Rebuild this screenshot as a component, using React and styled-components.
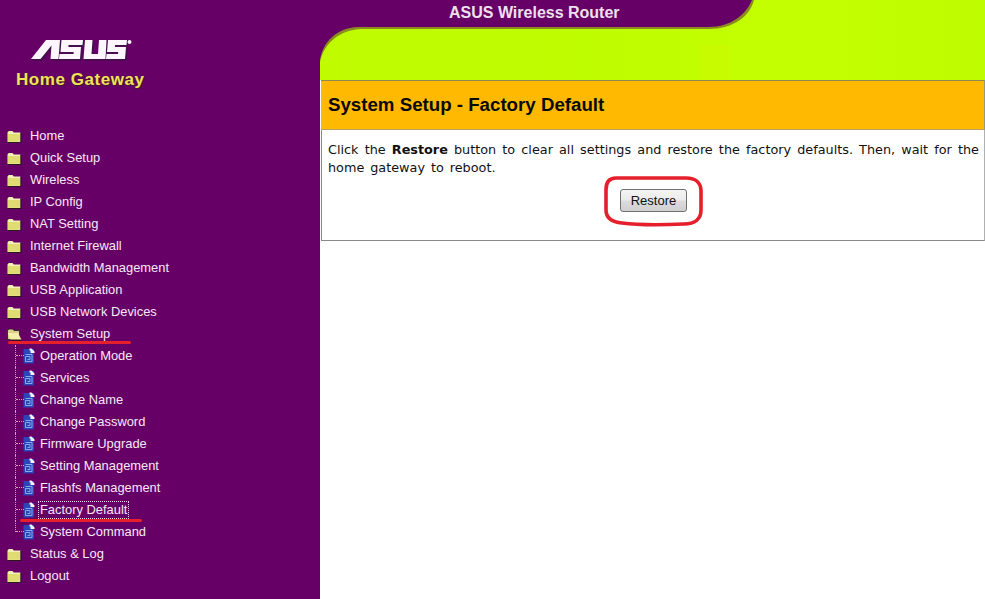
import React from "react";
import styled, { createGlobalStyle } from "styled-components";

const GlobalStyle = createGlobalStyle`
  html, body {
    margin: 0;
    padding: 0;
    background: #fff;
    overflow: hidden;
  }
`;

const Page = styled.div`
  display: flex;
  width: 985px;
  height: 599px;
  overflow: hidden;
`;

const Sidebar = styled.aside`
  width: 320px;
  flex: none;
  background: #660066;
  padding-top: 39px;
  box-sizing: border-box;
`;

const Brand = styled.div`
  height: 86px;
  padding-left: 16px;
`;

const LogoMark = styled.svg`
  display: block;
  width: 102px;
  height: 24px;
  margin-left: 14px;
  filter: blur(0.35px);
`;

const GatewayTitle = styled.div`
  margin-top: 7px;
  font: bold 17px "Liberation Sans", Arial, sans-serif;
  letter-spacing: 0.55px;
  color: #efe25c;
  text-shadow: 1px 1px 1px #3c1c20;
`;

const Tree = styled.ul`
  list-style: none;
  margin: 0;
  padding: 0;
`;

const Row = styled.li`
  display: flex;
  align-items: center;
  height: 22px;
  padding-left: ${(p) => (p.$child ? "23px" : "7px")};
  position: relative;
  font: 12.9px "Liberation Sans", Arial, sans-serif;
  color: #f6e8f6;
`;

const Label = styled.span`
  margin-left: ${(p) => (p.$child ? "4px" : "7px")};
  padding: 0 1px;
  outline: ${(p) => (p.$focused ? "1px dotted #e8d8e8" : "none")};
  line-height: 16px;
`;

const Connector = styled.i`
  position: absolute;
  left: 15px;
  top: 0;
  height: ${(p) => (p.$last ? "11px" : "22px")};
  width: 8px;
  border-left: 1px dotted #c8a4c8;
  &::after {
    content: "";
    position: absolute;
    left: 0;
    top: 10px;
    width: 8px;
    border-top: 1px dotted #c8a4c8;
  }
`;

const RedMark = styled.span`
  position: absolute;
  left: ${(p) => p.$left}px;
  width: ${(p) => p.$width}px;
  bottom: ${(p) => p.$bottom}px;
  height: 3px;
  border-radius: 2px;
  background: #e5202c;
`;

const Main = styled.main`
  flex: 1;
  display: flex;
  flex-direction: column;
  background: #fff;
  min-width: 0;
`;

const Banner = styled.div`
  position: relative;
  height: 80px;
  flex: none;
`;

const BannerArt = styled.svg`
  display: block;
  width: 665px;
  height: 80px;
`;

const BannerTitle = styled.div`
  position: absolute;
  left: 129px;
  top: 4px;
  font: bold 16px "Liberation Sans", Arial, sans-serif;
  color: #eee0ee;
`;

const TitleBar = styled.h1`
  margin: 0 0 0 1px;
  height: 50px;
  box-sizing: border-box;
  border-top: 1px solid #8f8a50;
  border-bottom: 1px solid #b9a060;
  border-right: 1px solid #9a9a70;
  background: #ffb900;
  padding-left: 7px;
  display: flex;
  align-items: center;
  font: bold 18.7px "Liberation Sans", Arial, sans-serif;
  color: #0a0a0a;
`;

const Panel = styled.section`
  margin-left: 1px;
  height: 111px;
  box-sizing: border-box;
  border-left: 1px solid #8a8a8a;
  border-right: 1px solid #b0b0b0;
  border-bottom: 1px solid #8a8a8a;
  padding: 11px 5px 0 6px;
  background: #fff;
`;

const Message = styled.p`
  margin: 0;
  font: 12.8px/18px "DejaVu Sans", Verdana, sans-serif;
  word-spacing: 1.9px;
  color: #111;
  text-align: justify;
`;

const ButtonRow = styled.div`
  display: flex;
  justify-content: center;
  margin-top: 12px;
`;

const Circled = styled.div`
  position: relative;
`;

const RestoreButton = styled.button`
  width: 67px;
  height: 23px;
  padding: 0;
  border: 1px solid #707070;
  border-radius: 3px;
  background: linear-gradient(#f4f4f4 0%, #ebebeb 48%, #dcdcdc 52%, #cfcfcf 100%);
  font: 13px "Liberation Sans", Arial, sans-serif;
  color: #111;
`;

const RedRing = styled.svg`
  position: absolute;
  left: -18px;
  top: -14px;
  width: 103px;
  height: 52px;
  pointer-events: none;
`;

function Folder({ open }) {
  if (open) {
    return (
      <svg width="15" height="13" viewBox="0 0 15 13">
        <path d="M0.5 11.5 V2.5 L2 1 H5.5 L7 2.5 H12.5 V11.5 Z" fill="#d8d088" stroke="#2a1a20" strokeWidth="0.8" />
        <path d="M0.8 5 H11 L14.5 11.8 H3.5 Z" fill="#f4efa8" />
        <path d="M3.5 12.2 H14.5" stroke="#1c1408" strokeWidth="1" />
      </svg>
    );
  }
  return (
    <svg width="15" height="13" viewBox="0 0 15 13">
      <path d="M0.5 12 V2.5 L1.8 1 H5.5 L6.8 2.5 H13.5 V12 Z" fill="#f3efb6" />
      <rect x="1" y="4" width="12.5" height="7.8" fill="#e0dc72" />
      <path d="M14 3 V12.5 H1" stroke="#2a1a20" strokeWidth="1.2" fill="none" />
    </svg>
  );
}

function Doc() {
  return (
    <svg width="12" height="16" viewBox="0 0 12 16">
      <rect x="0.5" y="1" width="10.5" height="14.5" fill="#2a46b8" />
      <path d="M6.5 0.5 H8.5 L11.5 3.5 V5 H7.5 V2.5 H6.5 Z" fill="#f4f6ff" />
      <path d="M2.5 6.5 H9 V13.5 H2.5 V8.5 H7 V11.5 H4.5" stroke="#86a8e8" strokeWidth="1" fill="none" />
    </svg>
  );
}

const topItems = [
  "Home",
  "Quick Setup",
  "Wireless",
  "IP Config",
  "NAT Setting",
  "Internet Firewall",
  "Bandwidth Management",
  "USB Application",
  "USB Network Devices",
];

const setupItems = [
  "Operation Mode",
  "Services",
  "Change Name",
  "Change Password",
  "Firmware Upgrade",
  "Setting Management",
  "Flashfs Management",
  "Factory Default",
  "System Command",
];

const logoPaths = [
  "M1 20 L16 1 H30 L28.5 20 H20.5 L21.5 6.5 L10.5 20 Z",
  "M31.5 1 H53 L52.5 6 H38.5 L38.4 8 H51 L50 20 H29 L29.5 15 H43.5 L43.7 13 H30.5 Z",
  "M55 1 H62.5 L61.5 15 H68 L69 1 H76.5 L75.5 20 H53.5 Z",
  "M78 1 H97 L96.5 6 H85 L84.9 8 H96 L95 20 H76 L76.5 15 H88 L88.2 13 H77 Z",
];

function App() {
  return (
    <>
      <GlobalStyle />
      <Page>
        <Sidebar>
          <Brand>
            <LogoMark viewBox="0 0 102 24">
              <g fill="#3c1448" transform="translate(1.5 1.5)">
                {logoPaths.map((d) => (
                  <path key={d} d={d} />
                ))}
              </g>
              <g fill="#fdf6fd">
                {logoPaths.map((d) => (
                  <path key={d} d={d} />
                ))}
                <circle cx="99.5" cy="3" r="2" />
              </g>
            </LogoMark>
            <GatewayTitle>Home Gateway</GatewayTitle>
          </Brand>
          <Tree>
            {topItems.map((t) => (
              <Row key={t}>
                <Folder />
                <Label>{t}</Label>
              </Row>
            ))}
            <Row>
              <Folder open />
              <Label>System Setup</Label>
              <RedMark $left={8} $width={123} $bottom={1} />
            </Row>
            {setupItems.map((t, i) => (
              <Row key={t} $child>
                <Connector $last={i === setupItems.length - 1} />
                <Doc />
                <Label $child $focused={t === "Factory Default"}>{t}</Label>
                {t === "Factory Default" && <RedMark $left={20} $width={122} $bottom={-1} />}
              </Row>
            ))}
            <Row>
              <Folder />
              <Label>Status &amp; Log</Label>
            </Row>
            <Row>
              <Folder />
              <Label>Logout</Label>
            </Row>
          </Tree>
        </Sidebar>
        <Main>
          <Banner>
            <BannerArt viewBox="0 0 665 80">
              <defs>
                <linearGradient id="lime" x1="0" x2="1" y1="0" y2="0">
                  <stop offset="0" stopColor="#c0fb00" />
                  <stop offset="0.4" stopColor="#befc00" />
                  <stop offset="0.7" stopColor="#c4ff00" />
                  <stop offset="1" stopColor="#befc00" />
                </linearGradient>
              </defs>
              <rect width="665" height="80" fill="url(#lime)" />
              <rect x="380" y="45" width="30" height="35" fill="#c8fb00" />
              <path d="M0 0 H434 C430 16 414 29 388 29 H42 C18 30 4 44 0 62 Z" fill="#8a8a20" />
              <path d="M0 0 H432 C426 14 412 27 388 27 H38 C16 28 3 42 0 60 Z" fill="#660066" />
            </BannerArt>
            <BannerTitle>ASUS Wireless Router</BannerTitle>
          </Banner>
          <TitleBar>System Setup - Factory Default</TitleBar>
          <Panel>
            <Message>
              Click the <b>Restore</b> button to clear all settings and restore the factory defaults. Then, wait for the home gateway to reboot.
            </Message>
            <ButtonRow>
              <Circled>
                <RestoreButton>Restore</RestoreButton>
                <RedRing viewBox="0 0 103 52">
                  <path
                    d="M14 3 H84 C94 3 99 8 99 16 V35 C99 44 93 49 82 49 C60 50 35 50 20 48 C9 47 4 43 4 35 V15 C4 7 7 3 14 3 Z"
                    fill="none"
                    stroke="#e5202c"
                    strokeWidth="3.6"
                  />
                </RedRing>
              </Circled>
            </ButtonRow>
          </Panel>
        </Main>
      </Page>
    </>
  );
}

export default App;
